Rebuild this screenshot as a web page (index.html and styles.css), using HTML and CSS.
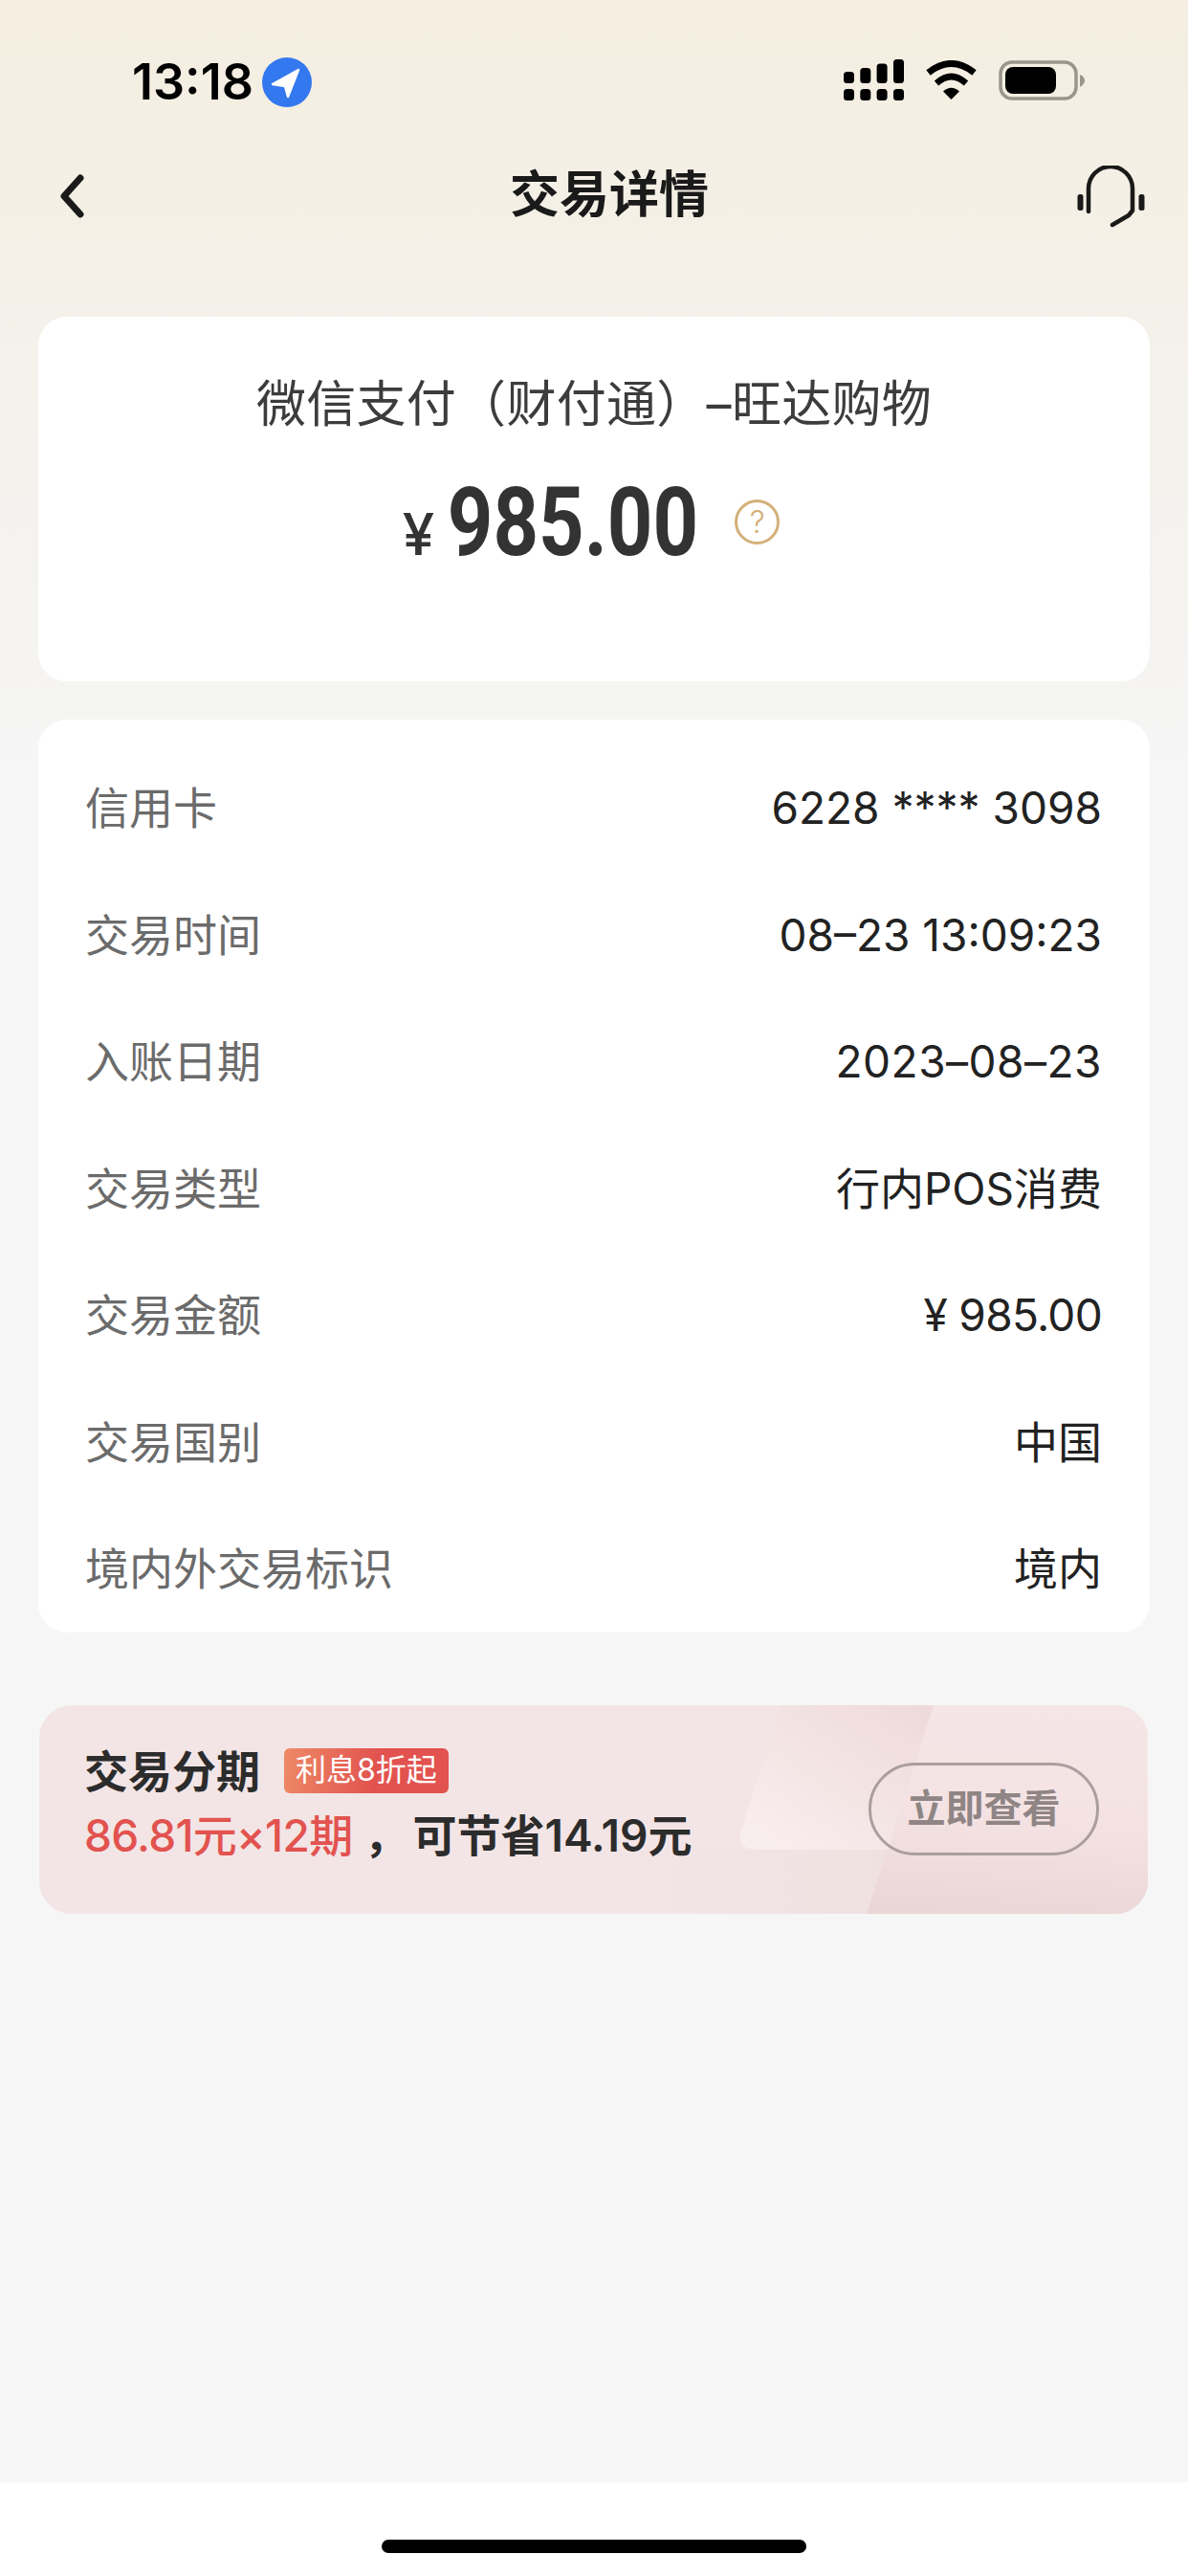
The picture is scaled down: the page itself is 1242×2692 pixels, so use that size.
FILE: index.html
```html
<!DOCTYPE html>
<html lang="zh-CN">
<head>
  <meta charset="UTF-8">
  <meta name="viewport" content="width=device-width, initial-scale=1">
  <title>交易详情</title>
  <link rel="stylesheet" href="styles.css">
</head>
<body>
  <div class="page">
    <div class="status-bar">
      <div class="status-left">
        <span class="clock">13:18</span>
        <svg class="loc-icon" width="52" height="52" viewBox="-26 -26 52 52">
          <circle r="26" fill="#3478f0"/>
          <path d="M12 -13 L-15 2 L-2 4 L1 15 Z" fill="#fff" stroke="#fff" stroke-width="2.5" stroke-linejoin="round"/>
        </svg>
      </div>
      <div class="status-right">
        <svg width="63" height="43" viewBox="0 0 63 43" fill="#000">
          <rect x="0" y="13" width="11" height="12" rx="3.5"/>
          <rect x="17.3" y="9" width="11" height="16" rx="3.5"/>
          <rect x="34.6" y="4.500" width="11" height="20.500" rx="3.5"/>
          <rect x="52" y="0" width="11" height="25" rx="3.5"/>
          <rect x="0" y="31" width="11" height="12" rx="3.5"/>
          <rect x="17.3" y="31" width="11" height="12" rx="3.5"/>
          <rect x="34.6" y="31" width="11" height="12" rx="3.5"/>
          <rect x="52" y="31" width="11" height="12" rx="3.5"/>
        </svg>
        <svg class="wifi" width="55" height="41" viewBox="0 0 55 41">
          <path d="M3.500 13 Q27.500 -6 51.500 13" fill="none" stroke="#000" stroke-width="7"/>
          <path d="M12 24 Q27.500 10 43 24" fill="none" stroke="#000" stroke-width="6.500"/>
          <path d="M27.500 41 L19 32.500 Q27.500 25 36 32.500 Z" fill="#000"/>
        </svg>
        <svg class="battery" width="90" height="42" viewBox="0 0 90 42">
          <rect x="2" y="2" width="79" height="38" rx="12" fill="none" stroke="#99968c" stroke-width="3.500"/>
          <rect x="7" y="7" width="53" height="28" rx="8" fill="#000"/>
          <path d="M85 15 Q90 17 90 21 Q90 25 85 28 Z" fill="#99968c"/>
        </svg>
      </div>
    </div>

    <div class="nav-bar">
      <svg class="back" width="26" height="46" viewBox="0 0 26 46">
        <path d="M22 4 L5 23 L22 42" fill="none" stroke="#1a1a1a" stroke-width="7" stroke-linecap="round" stroke-linejoin="round"/>
      </svg>
      <div class="nav-title">交易详情</div>
      <svg class="headset" width="72" height="66" viewBox="27 23 72 66">
        <path d="M39 71 V47 a23 23 0 0 1 46 0 V70 L81 75 L64 85" fill="none" stroke="#1a1a1a" stroke-width="4.500" stroke-linecap="round" stroke-linejoin="round"/>
        <rect x="27.500" y="53" width="6" height="17" rx="2.500" fill="#1a1a1a"/>
        <rect x="91.500" y="53" width="6" height="17" rx="2.500" fill="#1a1a1a"/>
      </svg>
    </div>

    <div class="card summary">
      <div class="merchant">微信支付（财付通）–旺达购物</div>
      <div class="amount-line">
        <span class="yen">¥</span>
        <span class="amount">985.00</span>
        <span class="help">?</span>
      </div>
    </div>

    <div class="card details">
      <div class="row"><span class="label">信用卡</span><span class="value">6228 **** 3098</span></div>
      <div class="row"><span class="label">交易时间</span><span class="value">08–23 13:09:23</span></div>
      <div class="row"><span class="label">入账日期</span><span class="value value-date">2023–08–23</span></div>
      <div class="row"><span class="label">交易类型</span><span class="value value-cn">行内POS消费</span></div>
      <div class="row"><span class="label">交易金额</span><span class="value value-money">¥ 985.00</span></div>
      <div class="row"><span class="label">交易国别</span><span class="value value-cn">中国</span></div>
      <div class="row"><span class="label">境内外交易标识</span><span class="value value-cn">境内</span></div>
    </div>

    <div class="promo">
      <svg class="promo-bg" width="1159" height="218" viewBox="0 0 1159 218">
        <defs>
          <linearGradient id="lowFade" x1="0" y1="0" x2="1" y2="0">
            <stop offset="0" stop-color="#f0e1e1" stop-opacity="0"/>
            <stop offset="1" stop-color="#f0e1e1"/>
          </linearGradient>
          <linearGradient id="lightFade" x1="1" y1="0" x2="0.1" y2="1">
            <stop offset="0" stop-color="#efd9da"/>
            <stop offset="0.45" stop-color="#f3e3e3"/>
            <stop offset="1" stop-color="#f9eeee"/>
          </linearGradient>
          <linearGradient id="cornerFade" x1="0.5" y1="0" x2="0.4" y2="1">
            <stop offset="0" stop-color="#f6e5e6"/>
            <stop offset="0.5" stop-color="#f5e3e4"/>
            <stop offset="1" stop-color="#ebd6d6"/>
          </linearGradient>
        </defs>
        <path d="M600 151 H887 L865 218 H600 Z" fill="url(#lowFade)"/>
        <path d="M935 0 H1159 V218 H865 Z" fill="url(#cornerFade)"/>
        <path d="M776 0 H935 L887 151 H752 Q728 151 734 130 Z" fill="url(#lightFade)"/>
      </svg>
      <div class="promo-text">
        <div class="promo-head">
          <span class="promo-title">交易分期</span>
          <span class="promo-tag">利息8折起</span>
        </div>
        <div class="promo-line">
          <span class="promo-red">86.81元×12期</span><span class="promo-comma">，</span><span class="promo-dark">可节省14.19元</span>
        </div>
      </div>
      <div class="promo-btn">立即查看</div>
    </div>

    <div class="home-area"><div class="home-bar"></div></div>
  </div>
</body>
</html>
```

FILE: styles.css
```css
* { box-sizing: border-box; }
html, body {
  margin: 0;
  padding: 0;
}
body {
  font-family: Inter, "Noto Sans CJK SC", sans-serif;
  color: #222;
  background: #f6f6f6;
}
.page {
  min-height: 2692px;
  display: flex;
  flex-direction: column;
  background: linear-gradient(180deg, #f5eee1 0, #f4f0e6 240px, #f4f1ea 320px, #f5f4f2 700px, #f6f6f6 800px);
}

/* status bar */
.status-bar {
  height: 146px;
  padding: 60px 108px 0 138px;
  display: flex;
  justify-content: space-between;
  align-items: flex-start;
}
.status-left {
  display: flex;
  align-items: center;
  gap: 9px;
}
.clock {
  font-size: 52px;
  font-weight: 600;
  line-height: 46px;
  color: #000;
}
.status-right {
  display: flex;
  align-items: center;
  gap: 22px;
  margin-top: 2px;
}

/* nav */
.nav-bar {
  height: 116px;
  padding: 0 44px 0 76px;
  display: grid;
  grid-template-columns: 1fr auto 1fr;
  align-items: center;
}
.back {
  margin: 2px 0 0 -14px;
}
.headset {
  justify-self: end;
  margin-top: 4px;
}
.nav-title {
  font-size: 52px;
  font-weight: 700;
  color: #1a1a1a;
  line-height: 70px;
}

/* cards */
.card {
  background: #fff;
  border-radius: 30px;
  margin: 0 40px;
}
.summary {
  height: 381px;
  margin-top: 69px;
  padding-top: 57px;
  text-align: center;
}
.merchant {
  font-size: 52px;
  line-height: 70px;
  letter-spacing: 0.3px;
  color: #3c3c3c;
}
.amount-line {
  margin-top: 38px;
  padding-right: 6px;
  display: flex;
  justify-content: center;
  align-items: baseline;
  color: #333;
}
.yen {
  font-size: 60px;
  font-weight: 500;
  line-height: 100px;
}
.amount {
  font-family: Roboto, sans-serif;
  font-size: 100px;
  font-weight: 700;
  line-height: 100px;
  display: inline-block;
  transform: scaleX(0.83);
  margin: 0 -24px 0 -13px;
}
.help {
  width: 47px;
  height: 47px;
  margin-left: 35px;
  border: 3px solid #d4b079;
  border-radius: 50%;
  font-size: 32px;
  font-weight: 300;
  line-height: 41px;
  color: #d4b079;
  align-self: center;
  position: relative;
  top: -7px;
}
.details {
  height: 954px;
  margin-top: 40px;
  padding: 27px 50px 0 49px;
}
.row {
  height: 132.500px;
  display: flex;
  justify-content: space-between;
  align-items: center;
  font-size: 46px;
}
.label {
  color: #6b6b6b;
  margin-bottom: 8px;
}
.value {
  color: #222;
  margin-bottom: 2px;
}
.value-cn {
  margin-bottom: 8px;
}
.value-date {
  letter-spacing: 0.5px;
}
.value-money {
  letter-spacing: -0.7px;
}

/* installment banner */
.promo {
  position: relative;
  height: 218px;
  margin: 76px 42px 0 41px;
  padding: 0 51px 0 47px;
  border-radius: 34px;
  overflow: hidden;
  background: #f3e5e6;
  display: flex;
  justify-content: space-between;
  align-items: center;
}
.promo-bg {
  position: absolute;
  left: 0;
  top: 0;
}
.promo-text, .promo-btn {
  position: relative;
}
.promo-text {
  margin-top: -14px;
}
.promo-head {
  display: flex;
  align-items: center;
  gap: 25px;
  height: 60px;
}
.promo-title {
  font-size: 46px;
  font-weight: 700;
  margin-top: -6px;
  color: #2c2c2c;
}
.promo-tag {
  height: 47px;
  padding: 0 12px;
  border-radius: 6px;
  font-size: 32px;
  line-height: 45px;
  color: #fff;
  background: linear-gradient(100deg, #ee8a66, #e2534f 55%);
}
.promo-line {
  margin-top: 7px;
  font-size: 46px;
  line-height: 60px;
  font-weight: 500;
}
.promo-red {
  color: #e2534f;
  letter-spacing: -0.7px;
}
.promo-comma {
  color: #2c2c2c;
  font-weight: 600;
  margin: 0 5px 0 12px;
}
.promo-dark {
  color: #2c2c2c;
  font-weight: 600;
}
.promo-btn {
  width: 241px;
  height: 97px;
  margin-top: -2px;
  border: 3px solid #ab9e9e;
  border-radius: 49px;
  font-size: 40px;
  font-weight: 700;
  line-height: 89px;
  text-align: center;
  color: #8f8585;
}

/* bottom */
.home-area {
  margin-top: auto;
  height: 98px;
  background: #fff;
  padding-top: 60px;
}
.home-bar {
  width: 444px;
  height: 14px;
  margin: 0 auto;
  border-radius: 7px;
  background: #000;
}
```
